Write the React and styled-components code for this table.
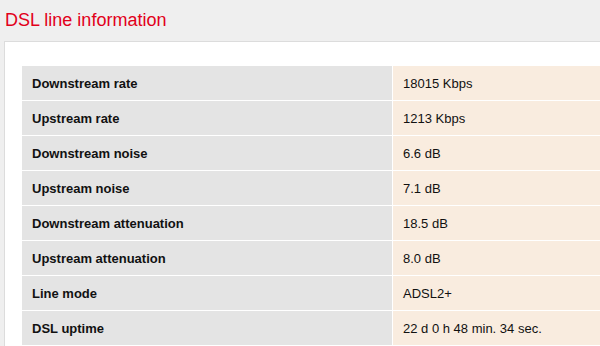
import React from "react";
import styled, { createGlobalStyle } from "styled-components";

const Global = createGlobalStyle`
  html, body { margin: 0; padding: 0; background: #efefef; overflow: hidden; }
  body { font-family: "Liberation Sans", Arial, sans-serif; }
`;

const Page = styled.div`
  width: 600px;
  height: 346px;
  overflow: hidden;
  background: #efefef;
`;

const Title = styled.h1`
  margin: 0;
  padding: 9px 0 0 5px;
  height: 41px;
  box-sizing: border-box;
  font-size: 18px;
  font-weight: normal;
  color: #e2001a;
  line-height: 22px;
`;

const Panel = styled.div`
  margin-left: 4px;
  background: #fff;
  border-top: 1px solid #dcdcdc;
  border-left: 1px solid #dcdcdc;
  padding: 24px 0 20px 17px;
`;

const Table = styled.div`
  display: grid;
  grid-template-columns: 370px 1fr;
  column-gap: 1px;
  row-gap: 1px;
  width: 640px;
`;

const Cell = styled.div`
  height: 34px;
  display: flex;
  align-items: center;
  padding-left: 10px;
  font-size: 13px;
  color: #111;
  font-weight: ${(p) => (p.$label ? "bold" : "normal")};
  background: ${(p) => (p.$label ? "#e4e4e4" : "#f9ecdf")};
`;

const rows = [
  ["Downstream rate", "18015 Kbps"],
  ["Upstream rate", "1213 Kbps"],
  ["Downstream noise", "6.6 dB"],
  ["Upstream noise", "7.1 dB"],
  ["Downstream attenuation", "18.5 dB"],
  ["Upstream attenuation", "8.0 dB"],
  ["Line mode", "ADSL2+"],
  ["DSL uptime", "22 d 0 h 48 min. 34 sec."],
];

export default function App() {
  return (
    <Page>
      <Global />
      <Title>DSL line information</Title>
      <Panel>
        <Table>
          {rows.map(([k, v]) => (
            <React.Fragment key={k}>
              <Cell $label>{k}</Cell>
              <Cell>{v}</Cell>
            </React.Fragment>
          ))}
        </Table>
      </Panel>
    </Page>
  );
}
